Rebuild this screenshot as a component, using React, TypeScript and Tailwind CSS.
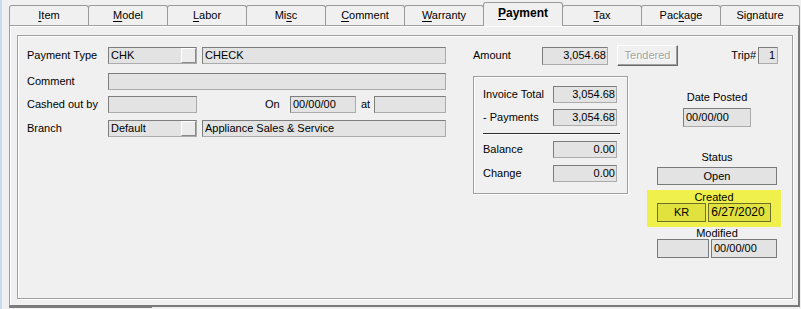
const font = "font-['Liberation_Sans',Arial,Helvetica,sans-serif]";

type TabDef = { pre?: string; key?: string; post?: string; active?: boolean };

const tabs: TabDef[] = [
  { key: "I", post: "tem" },
  { key: "M", post: "odel" },
  { key: "L", post: "abor" },
  { pre: "Mi", key: "s", post: "c" },
  { key: "C", post: "omment" },
  { key: "W", post: "arranty" },
  { key: "P", post: "ayment", active: true },
  { key: "T", post: "ax" },
  { pre: "Pac", key: "k", post: "age" },
  { pre: "Signature" },
];

const sunken =
  "border border-t-[#7d7d7d] border-l-[#7d7d7d] border-r-[#ababab] border-b-[#ababab] bg-[#e3e3e3]";
const boxed = "border border-[#7a7a7a] bg-[#e3e3e3]";
const hiBoxed = "border border-[#6f6f2c] bg-[#e1e23e]";
const raised =
  "border border-t-white border-l-white border-r-[#8a8a8a] border-b-[#8a8a8a] bg-[#ececec]";

const Tab = ({ t, first }: { t: TabDef; first: boolean }) => (
  <div
    className={
      t.active
        ? "relative z-10 -ml-px -mb-px w-[80px] h-[24px] pb-[2px] flex items-center justify-center border border-b-0 border-[#9a9a9a] rounded-t-[3px] bg-[#f0f0f0] font-bold text-[12px]"
        : first
          ? "w-[80px] h-[20px] flex items-center justify-center border border-b-0 border-[#9a9a9a] rounded-t-[3px] bg-[#f0f0f0]"
          : "-ml-px w-[80px] h-[20px] flex items-center justify-center border border-b-0 border-[#9a9a9a] rounded-t-[3px] bg-[#f0f0f0]"
    }
  >
    <span>
      {t.pre}
      {t.key && <span className="underline underline-offset-[2px]">{t.key}</span>}
      {t.post}
    </span>
  </div>
);

const Combo = ({ value }: { value: string }) => (
  <div className={`w-[89px] h-[17px] flex items-center justify-between pl-[2px] ${sunken}`}>
    <span>{value}</span>
    <div className={`w-[15px] h-[15px] ${raised}`} />
  </div>
);

const SumRow = ({ label, value, cls }: { label: string; value: string; cls: string }) => (
  <div className={`flex items-center h-[17px] ${cls}`}>
    <span className="w-[70px]">{label}</span>
    <div className={`w-[64px] h-[17px] flex items-center justify-end pr-[1px] ${sunken}`}>{value}</div>
  </div>
);

export default function App() {
  return (
    <div className={`w-[801px] h-[309px] overflow-hidden bg-[#f0f0f0] text-black text-[11px] leading-[13px] flex ${font}`}>
      <div className="w-[2px] h-full bg-[#cadcf4]" />
      <div className="flex flex-col">
        {/* tab strip */}
        <div className="flex items-end h-[25px] pl-[7px]">
          {tabs.map((t, i) => (
            <Tab key={i} t={t} first={i === 0} />
          ))}
        </div>

        {/* tab page */}
        <div className="ml-[7px] w-[791px] h-[282px] border-t border-l border-[#a0a0a0] border-r-2 border-r-[#7a7a7a] border-b-2 border-b-[#7a7a7a] shadow-[inset_1px_1px_0_#fff]">
          <div className="ml-[7px] mt-[9px] w-[776px] h-[264px] border border-[#a0a0a0] shadow-[inset_1px_1px_0_#fff,1px_1px_0_#fff] flex pt-[9px] pl-[9px]">
            {/* left column */}
            <div className="flex flex-col w-[419px] mt-[2px]">
              <div className="flex items-center h-[17px]">
                <span className="w-[81px]">Payment Type</span>
                <Combo value="CHK" />
                <div className={`ml-[5px] w-[244px] h-[17px] flex items-center pl-[2px] ${sunken}`}>CHECK</div>
              </div>
              <div className="flex items-center h-[17px] mt-[9px]">
                <span className="w-[81px]">Comment</span>
                <div className={`w-[338px] h-[17px] ${sunken}`} />
              </div>
              <div className="flex items-center h-[17px] mt-[6px]">
                <span className="w-[81px]">Cashed out by</span>
                <div className={`w-[89px] h-[17px] ${sunken}`} />
                <span className="ml-[68px] w-[25px]">On</span>
                <div className={`w-[66px] h-[17px] flex items-center pl-[2px] ${sunken}`}>00/00/00</div>
                <span className="ml-[5px] w-[13px]">at</span>
                <div className={`w-[72px] h-[17px] ${sunken}`} />
              </div>
              <div className="flex items-center h-[17px] mt-[7px]">
                <span className="w-[81px]">Branch</span>
                <Combo value="Default" />
                <div className={`ml-[5px] w-[244px] h-[17px] flex items-center pl-[2px] ${sunken}`}>
                  Appliance Sales &amp; Service
                </div>
              </div>
            </div>

            {/* right section */}
            <div className="flex flex-col w-[308px] ml-[27px]">
              <div className="flex items-center h-[21px]">
                <span className="w-[69px]">Amount</span>
                <div className={`w-[66px] h-[18px] flex items-center justify-end pr-[1px] ${sunken}`}>3,054.68</div>
                <div className="ml-[9px] w-[61px] h-[21px] flex items-center justify-center border border-t-white border-l-white border-r-[#6a6a6a] border-b-[#6a6a6a] shadow-[inset_-1px_-1px_0_#a0a0a0] text-[#a3a3a3] [text-shadow:1px_1px_0_#fff]">
                  Tendered
                </div>
                <span className="ml-auto mr-[2px]">Trip#</span>
                <div className={`w-[20px] h-[17px] mr-[3px] flex items-center justify-end pr-[2px] ${sunken}`}>1</div>
              </div>

              <div className="flex items-start">
                {/* totals box */}
                <div className="mt-[10px] w-[155px] h-[118px] border border-[#a0a0a0] shadow-[inset_1px_1px_0_#fff,1px_1px_0_#fff] pt-[9px] pl-[9px]">
                  <SumRow label="Invoice Total" value="3,054.68" cls="" />
                  <SumRow label="- Payments" value="3,054.68" cls="mt-[6px]" />
                  <div className="mt-[7px] w-[137px] h-[2px] border-t border-t-[#2e2e2e] border-b border-b-white" />
                  <SumRow label="Balance" value="0.00" cls="mt-[6px]" />
                  <SumRow label="Change" value="0.00" cls="mt-[7px]" />
                </div>

                {/* status column */}
                <div className="ml-[19px] w-[134px] mt-[24px] flex flex-col">
                  <div className="ml-[10px] w-[120px] text-center leading-[14px]">Date Posted</div>
                  <div className={`ml-[36px] mt-[4px] w-[68px] h-[19px] flex items-center pl-[2px] ${sunken}`}>00/00/00</div>

                  <div className="ml-[10px] mt-[23px] w-[120px] text-center leading-[14px]">Status</div>
                  <div className={`ml-[10px] mt-[3px] w-[120px] h-[18px] flex items-center justify-center ${boxed}`}>Open</div>

                  <div className="mt-[5px] w-[134px] h-[37px] bg-[#f0f04c] px-[10px] flex flex-col">
                    <div className="text-center leading-[12px] pt-[1px]">Created</div>
                    <div className="flex gap-[2px] mt-[0px]">
                      <div className={`w-[52px] h-[19px] flex items-center justify-center ${hiBoxed}`}>KR</div>
                      <div className={`w-[66px] h-[19px] flex items-center pl-[2px] text-[12px] ${hiBoxed}`}>6/27/2020</div>
                    </div>
                  </div>

                  <div className="ml-[10px] w-[120px] text-center leading-[12px]">Modified</div>
                  <div className="ml-[10px] flex gap-[2px]">
                    <div className={`w-[52px] h-[19px] ${boxed}`} />
                    <div className={`w-[66px] h-[19px] flex items-center pl-[2px] ${boxed}`}>00/00/00</div>
                  </div>
                </div>
              </div>
            </div>
          </div>
        </div>
        <div className="ml-[7px] w-[143px] h-px bg-[#808080]" />
      </div>
    </div>
  );
}
